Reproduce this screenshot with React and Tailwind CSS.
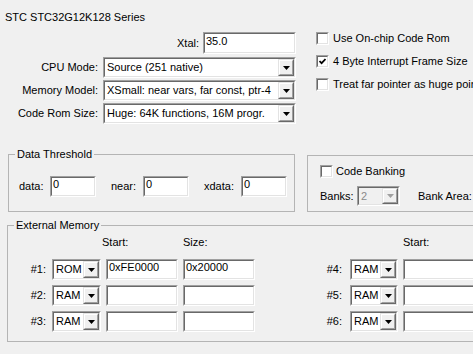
import React from "react";

function Sunken({ className = "", inner = "bg-white", children }) {
  return (
    <div className={`border border-t-[#a0a0a0] border-l-[#a0a0a0] border-r-white border-b-white ${className}`}>
      <div className={`h-full w-full border border-t-[#696969] border-l-[#696969] border-r-[#e3e3e3] border-b-[#e3e3e3] ${inner}`}>
        {children}
      </div>
    </div>
  );
}

function DropBtn({ disabled }) {
  return (
    <div className="w-[16px] h-full shrink-0 border border-t-[#e3e3e3] border-l-[#e3e3e3] border-r-[#696969] border-b-[#696969]">
      <div className="h-full w-full border border-t-white border-l-white border-r-[#a0a0a0] border-b-[#a0a0a0] bg-[#f0f0f0] flex items-center justify-center">
        <svg width="7" height="4" viewBox="0 0 7 4">
          <path d="M0 0H7L3.5 4Z" fill={disabled ? "#a0a0a0" : "#000"} />
        </svg>
      </div>
    </div>
  );
}

function Combo({ className = "", value, disabled }) {
  return (
    <Sunken className={className} inner={disabled ? "bg-[#f0f0f0]" : "bg-white"}>
      <div className="flex h-full items-center">
        <span className={`flex-1 pl-[2px] whitespace-nowrap overflow-hidden ${disabled ? "text-[#8a8a8a]" : "text-black"}`}>
          {value}
        </span>
        <DropBtn disabled={disabled} />
      </div>
    </Sunken>
  );
}

function Edit({ className = "", value }) {
  return (
    <Sunken className={className}>
      <div className="pl-[1px] whitespace-nowrap">{value}</div>
    </Sunken>
  );
}

function Check({ checked }) {
  return (
    <Sunken className="w-[13px] h-[13px] shrink-0">
      <div className="flex h-full w-full items-center justify-center">
        {checked && (
          <svg width="7" height="7" viewBox="0 0 7 7">
            <polyline points="0.5,3 2.6,5.2 6.5,1" fill="none" stroke="#000" strokeWidth="1.7" />
          </svg>
        )}
      </div>
    </Sunken>
  );
}

const COLS = "grid grid-cols-[39px_49px_72px_72px_85px_48px_72px] gap-x-[5px]";

function MemRow({ a, b, aType, bType, start, size }) {
  return (
    <div className={`${COLS} h-[21px] items-center`}>
      <span className="text-right pr-[1px]">{a}</span>
      <Combo className="h-[21px]" value={aType} />
      <Edit className="h-[21px]" value={start} />
      <Edit className="h-[21px]" value={size} />
      <span className="text-right pr-[3px]">{b}</span>
      <Combo className="h-[21px]" value={bType} />
      <Edit className="h-[21px]" value="" />
    </div>
  );
}

export default function App() {
  const combos = [
    ["CPU Mode:", "Source (251 native)"],
    ["Memory Model:", "XSmall: near vars, far const, ptr-4"],
    ["Code Rom Size:", "Huge: 64K functions, 16M progr."],
  ];
  const checks = [
    ["Use On-chip Code Rom", false],
    ["4 Byte Interrupt Frame Size", true],
    ["Treat far pointer as huge pointer", false],
  ];
  return (
    <div className="w-[473px] h-[354px] overflow-hidden bg-[#f0f0f0] text-[11px] leading-[13px] text-black font-['Liberation_Sans',Arial,sans-serif]">
      {/* top */}
      <div className="flex h-[148px]">
        <div className="w-[300px] shrink-0 flex flex-col">
          <div className="pl-[5px] pt-[11px] whitespace-nowrap">STC STC32G12K128 Series</div>
          <div className="mt-[8px] flex items-center justify-end gap-[4px] pr-[4px]">
            <span>Xtal:</span>
            <Sunken className="w-[93px] h-[22px]">
              <div className="pl-[1px] pt-[1px]">35.0</div>
            </Sunken>
          </div>
          <div className="mt-[3px] flex flex-col gap-[2px] pr-[4px]">
            {combos.map(([l, v]) => (
              <div key={l} className="flex items-center justify-end gap-[5px]">
                <span className="whitespace-nowrap">{l}</span>
                <Combo className="w-[193px] h-[21px]" value={v} />
              </div>
            ))}
          </div>
        </div>
        <div className="flex-1 pl-[16px] pt-[27px] flex flex-col">
          {checks.map(([t, c]) => (
            <div key={t} className="h-[23px] flex items-center gap-[4px] whitespace-nowrap">
              <Check checked={c} />
              <span>{t}</span>
            </div>
          ))}
        </div>
      </div>

      {/* middle */}
      <div className="flex h-[64px]">
        <fieldset className="ml-[8px] w-[287px] h-[64px] shrink-0 border border-[#b4b4b4]">
          <legend className="ml-[6px] px-[2px]">Data Threshold</legend>
          <div className="flex items-center pl-[10px] pt-[15px]">
            <span className="w-[31px]">data:</span>
            <Edit className="w-[46px] h-[21px]" value="0" />
            <span className="ml-[15px] w-[32px]">near:</span>
            <Edit className="w-[46px] h-[21px]" value="0" />
            <span className="ml-[15px] w-[37px]">xdata:</span>
            <Edit className="w-[46px] h-[21px]" value="0" />
          </div>
        </fieldset>
        <div className="ml-[12px] mt-[7px] w-[200px] h-[57px] shrink-0 border border-[#b4b4b4] pl-[12px] pt-[9px]">
          <div className="flex items-center gap-[3px] h-[13px] whitespace-nowrap">
            <Check checked={false} />
            <span>Code Banking</span>
          </div>
          <div className="mt-[8px] flex items-center whitespace-nowrap">
            <span className="w-[37px]">Banks:</span>
            <Combo className="w-[43px] h-[20px]" value="2" disabled />
            <span className="ml-[18px]">Bank Area:</span>
          </div>
        </div>
      </div>

      {/* external memory */}
      <fieldset className="ml-[7px] mt-[7px] w-[600px] h-[123px] border border-[#b4b4b4]">
        <legend className="ml-[6px] px-[2px]">External Memory</legend>
        <div className={`${COLS} pt-[4px] h-[17px]`}>
          <span />
          <span />
          <span className="-ml-[4px]">Start:</span>
          <span>Size:</span>
          <span />
          <span />
          <span>Start:</span>
        </div>
        <div className="mt-[10px] flex flex-col gap-[5px]">
          <MemRow a="#1:" b="#4:" aType="ROM" bType="RAM" start="0xFE0000" size="0x20000" />
          <MemRow a="#2:" b="#5:" aType="RAM" bType="RAM" start="" size="" />
          <MemRow a="#3:" b="#6:" aType="RAM" bType="RAM" start="" size="" />
        </div>
      </fieldset>
    </div>
  );
}
